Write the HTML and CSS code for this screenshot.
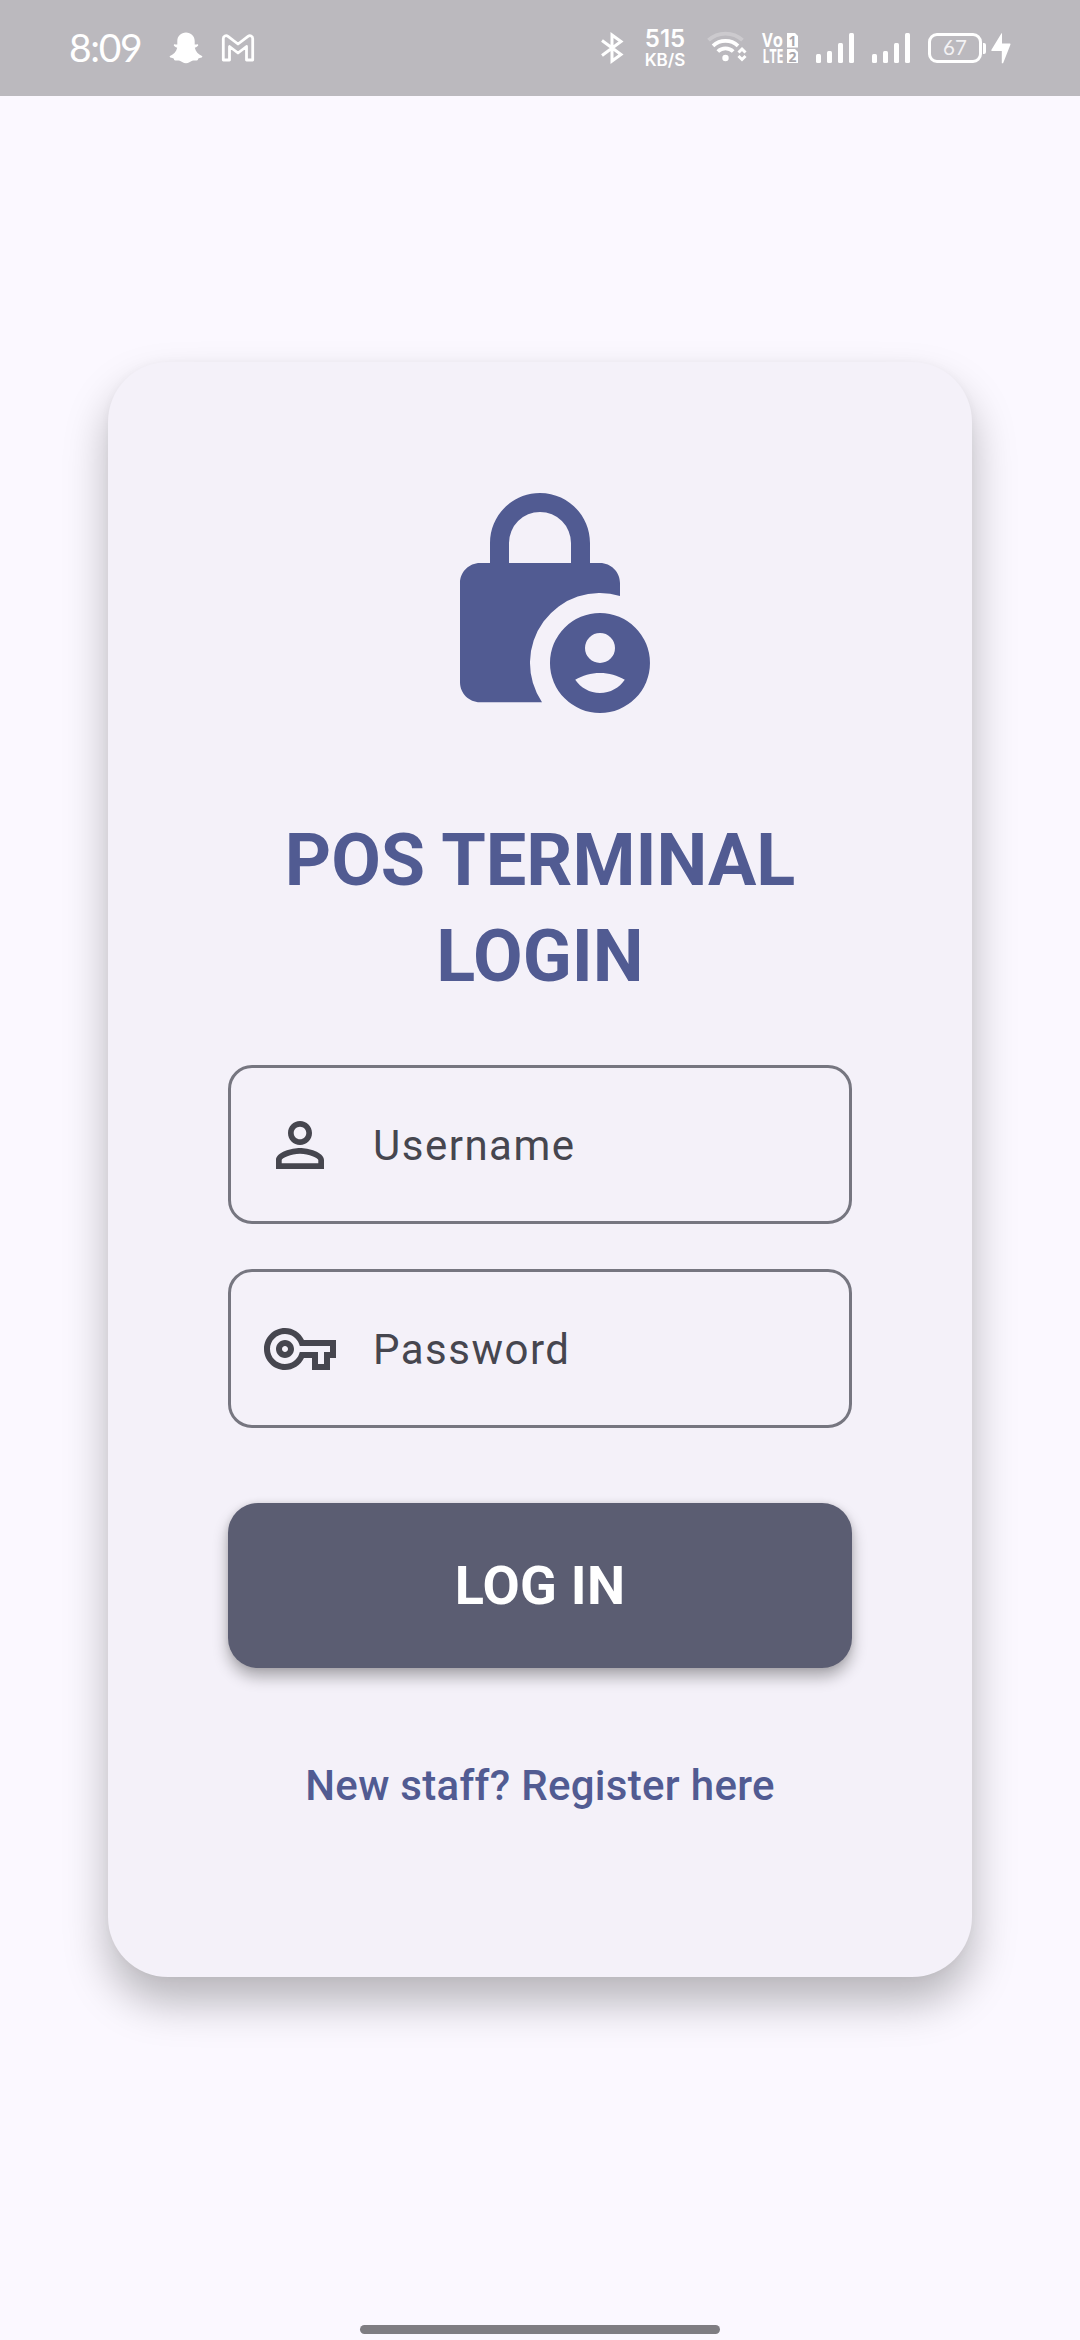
FILE: index.html
```html
<!DOCTYPE html>
<html lang="en">
<head>
<meta charset="utf-8">
<title>POS Terminal Login</title>
<link rel="stylesheet" href="styles.css">
</head>
<body>
<div class="screen">
  <header class="status-bar">
    <div class="status-left">
      <span class="clock">8:09</span>
      <svg class="snap" viewBox="0 0 34 32" width="34" height="32" fill="#fff"><path d="M17 .5c5 0 8.700 3.600 8.700 8.400v3.500c1.200.4 2.400-.7 3.300 0 .9.900-.4 2.300-3.200 3.400.9 3.800 3.400 6.800 7.200 8.100.6.300.3 1.300-.4 1.600-1.200.5-2.700.6-3.200 1-.5.500-.3 1.400-1 1.700-1.500.5-3.400-.2-5.200.6-2 .900-3.400 2.500-6.200 2.500s-4.200-1.600-6.200-2.500c-1.800-.8-3.700-.1-5.200-.6-.7-.3-.5-1.200-1-1.700-.5-.4-2-.5-3.200-1-.7-.3-1-1.300-.4-1.600 3.800-1.300 6.300-4.300 7.200-8.100C5.400 14.700 4.100 13.300 5 12.400c.9-.7 2.100.4 3.300 0V8.900C8.300 4.100 12 .5 17 .5z"/></svg>
      <svg class="gmail" viewBox="0 0 34 28" width="34" height="28" fill="none" stroke="#fff" stroke-width="2.800" stroke-linejoin="round"><path d="M2.300 4.500C2.300 2 5 .9 7 2.400L17 10l10-7.600c2-1.500 4.700-.4 4.700 2.100V26h-6.200V12.500L17 19l-8.500-6.500V26H2.300z"/></svg>
    </div>
    <div class="status-right">
      <svg class="bt" viewBox="0 0 24 32" width="24" height="32" fill="none" stroke="#fff" stroke-width="3"><path d="M2 8.500L21 22.500L12 29V3l9 6.500L2 23.500"/></svg>
      <div class="speed"><span class="speed-value">515</span><span class="speed-unit">KB/S</span></div>
      <svg class="wifi" viewBox="0 0 40 32" width="40" height="32" fill="none" stroke="#fff" stroke-width="3.800"><path d="M1.500 9.200a25 25 0 0 1 34 0" opacity=".25"/><path d="M6 14.800a18.500 18.500 0 0 1 25 0"/><path d="M10.800 20.500a11 11 0 0 1 15.400 0"/><circle cx="18.500" cy="27" r="3.200" fill="#fff" stroke="none"/><path d="M31.500 21.500l3.500-3.500 3.500 3.500M31.500 25l3.500 3.500 3.500-3.500" stroke-width="3"/></svg>
      <svg class="volte" viewBox="0 0 36 30" width="36" height="30" fill="#fff">
        <text x="0" y="14" textLength="21" lengthAdjust="spacingAndGlyphs">Vo</text>
        <text x="0.500" y="30" textLength="21" lengthAdjust="spacingAndGlyphs">LTE</text>
        <path d="M25 0h8l3 3v11.500H25zM25 16h8l3 3v11H25z"/>
        <text class="sim" x="30.500" y="12.500">1</text>
        <text class="sim" x="30.500" y="28.500">2</text>
      </svg>
      <svg class="signal" viewBox="0 0 38 30" width="38" height="30" fill="#fff"><rect y="21" width="5" height="9" rx="1.500"/><rect x="11" y="18" width="5" height="12" rx="1.500"/><rect x="22" y="10" width="5" height="20" rx="1.500"/><rect x="33" width="5" height="30" rx="1.500"/></svg>
      <svg class="signal" viewBox="0 0 38 30" width="38" height="30" fill="#fff"><rect y="21" width="5" height="9" rx="1.500"/><rect x="11" y="18" width="5" height="12" rx="1.500"/><rect x="22" y="10" width="5" height="20" rx="1.500"/><rect x="33" width="5" height="30" rx="1.500"/></svg>
      <div class="battery">67</div>
      <span class="battery-tip"></span>
      <svg class="bolt" viewBox="0 0 20 31" width="20" height="31" fill="#fff"><path d="M10.500.3L.6 16.500c-.5.900-.3 1.500.6 1.500h9.600v12.300h1.300L19.300 12c.4-.9.200-1.500-.7-1.500H11V.3z"/></svg>
    </div>
  </header>

  <main class="content">
    <section class="card">
      <svg class="lock" viewBox="0 0 24 24" width="240" height="240"><path fill-rule="evenodd" d="M20 11.290V10c0-1.100-.9-2-2-2h-1V6c0-2.760-2.240-5-5-5S7 3.240 7 6v2H6c-1.100 0-2 .9-2 2v9.920c0 1.100.9 2 2 2h6.200A7 7 0 0 1 20 11.290zM8.900 8V6a3.100 3.100 0 0 1 6.200 0v2z"/><path fill-rule="evenodd" d="M18 13a5 5 0 1 0 0 10 5 5 0 0 0 0-10zm0 2a1.500 1.500 0 1 1 0 3 1.500 1.500 0 0 1 0-3zm0 6c-1.030 0-1.940-.52-2.480-1.320.73-.42 1.570-.68 2.480-.68s1.750.26 2.480.68C19.940 20.480 19.030 21 18 21z"/></svg>
      <h1 class="title">POS TERMINAL<br>LOGIN</h1>
      <form class="form">
        <label class="field">
          <svg viewBox="0 0 24 24" width="72" height="72"><path d="M12 5.900c1.160 0 2.100.94 2.100 2.100s-.94 2.100-2.100 2.100S9.900 9.160 9.900 8s.94-2.100 2.100-2.100m0 9c2.970 0 6.100 1.460 6.100 2.100v1.100H5.900V17c0-.64 3.130-2.100 6.100-2.100M12 4C9.790 4 8 5.790 8 8s1.790 4 4 4 4-1.790 4-4-1.790-4-4-4zm0 9c-2.670 0-8 1.340-8 4v3h16v-3c0-2.660-5.330-4-8-4z"/></svg>
          <span>Username</span>
        </label>
        <label class="field">
          <svg viewBox="0 0 24 24" width="72" height="72"><path d="M22 19h-6v-4h-2.680c-1.140 2.420-3.600 4-6.320 4-3.860 0-7-3.140-7-7s3.140-7 7-7c2.720 0 5.170 1.580 6.320 4H24v6h-2v4zm-4-2h2v-4h2v-2H11.940l-.23-.67C11.010 8.340 9.110 7 7 7c-2.760 0-5 2.240-5 5s2.240 5 5 5c2.110 0 4.010-1.340 4.710-3.330l.23-.67H18v4zM7 15c-1.650 0-3-1.350-3-3s1.350-3 3-3 3 1.350 3 3-1.350 3-3 3zm0-4c-.55 0-1 .45-1 1s.45 1 1 1 1-.45 1-1-.45-1-1-1z"/></svg>
          <span>Password</span>
        </label>
        <button class="login" type="button">LOG IN</button>
      </form>
      <a class="register">New staff? Register here</a>
    </section>
  </main>
  <div class="home-indicator"></div>
</div>
</body>
</html>
```
FILE: styles.css
```css
* { box-sizing: border-box; }
body { margin: 0; background: #fbf8ff; font-family: Roboto, "Liberation Sans", sans-serif; }
svg { display: block; flex: none; }

.screen { width: 1080px; height: 2340px; display: flex; flex-direction: column; align-items: center; overflow: hidden; }

.status-bar { width: 100%; height: 96px; flex: none; padding: 0 69px 0 69px; display: flex; justify-content: space-between; align-items: flex-start; background: #bbb9be; color: #fff; }
.status-left, .status-right { display: flex; align-items: flex-start; }
.clock { width: 72px; margin-top: 23px; font: 400 39px/48px Lato, sans-serif; letter-spacing: -1.300px; white-space: nowrap; }
.snap { margin: 32px 0 0 28px; }
.gmail { margin: 34px 0 0 18px; }

.bt { margin-top: 32px; }
.speed { width: 42px; margin: 27px 0 0 20px; display: flex; flex-direction: column; align-items: center; font-family: Inter, sans-serif; font-weight: 600; }
.speed-value { font-size: 24px; line-height: 24px; }
.speed-unit { margin-top: 1px; font-size: 17px; line-height: 16px; }
.wifi { margin: 31px 0 0 21px; }
.volte { margin: 33px 0 0 15px; overflow: visible; font: 700 19px "Open Sans", sans-serif; }
.sim { fill: #aaa8ad; font-size: 14px; text-anchor: middle; }
.signal { margin: 33px 0 0 18px; }
.battery { width: 54px; height: 30px; margin: 33px 0 0 18px; border: 3px solid #fff; border-radius: 9px; font: 400 20.500px/23px Lato, sans-serif; text-align: center; color: #f3f2f4; }
.battery-tip { width: 3px; height: 11px; margin: 43px 5px 0 1px; border-radius: 0 2px 2px 0; background: #fff; }
.bolt { margin-top: 33px; }

.content { padding-top: 266px; }
.card { width: 864px; height: 1615px; padding: 121px 120px 0; display: flex; flex-direction: column; align-items: center; border-radius: 60px; background: #f4f1f9; box-shadow: 0 25px 44px rgba(0, 0, 0, .27), 0 0 10px rgba(0, 0, 0, .03); }
.lock { fill: #515b92; }
.title { margin: 90px 0 0; font-size: 72px; line-height: 96px; font-weight: 700; text-align: center; color: #515b92; white-space: nowrap; }
.form { width: 624px; margin-top: 60px; display: flex; flex-direction: column; gap: 45px; }
.field { height: 159px; padding-left: 33px; display: flex; align-items: center; gap: 37px; border: 3px solid #767680; border-radius: 24px; font-size: 42px; letter-spacing: 1.500px; color: #46464f; }
.field svg { fill: #46464f; }
.field span { padding-top: 1px; }
.login { height: 165px; margin-top: 30px; padding: 0; border: 0; border-radius: 30px; background: #5b5d72; color: #fff; font: 700 54px/72px Roboto, sans-serif; letter-spacing: .3px; box-shadow: 0 9px 15px rgba(0, 0, 0, .3), 0 0 6px rgba(0, 0, 0, .1); }
.register { margin-top: 88px; font-size: 42px; line-height: 60px; font-weight: 500; letter-spacing: .3px; color: #515b92; white-space: nowrap; }

.home-indicator { width: 360px; height: 9px; margin: auto 0 6px; border-radius: 5px; background: #7f7d82; }
```
